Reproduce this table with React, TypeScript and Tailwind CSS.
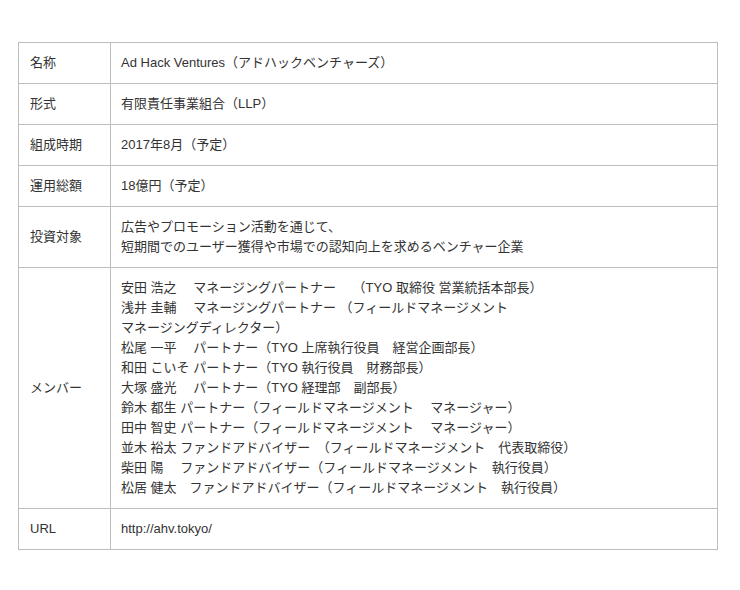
const rows: { label: string; lines: string[] }[] = [
  { label: "名称", lines: ["Ad Hack Ventures（アドハックベンチャーズ）"] },
  { label: "形式", lines: ["有限責任事業組合（LLP）"] },
  { label: "組成時期", lines: ["2017年8月（予定）"] },
  { label: "運用総額", lines: ["18億円（予定）"] },
  {
    label: "投資対象",
    lines: [
      "広告やプロモーション活動を通じて、",
      "短期間でのユーザー獲得や市場での認知向上を求めるベンチャー企業",
    ],
  },
  {
    label: "メンバー",
    lines: [
      "安田 浩之　 マネージングパートナー　 （TYO 取締役 営業統括本部長）",
      "浅井 圭輔　 マネージングパートナー （フィールドマネージメント",
      "マネージングディレクター）",
      "松尾 一平　 パートナー（TYO 上席執行役員　経営企画部長）",
      "和田 こいそ パートナー（TYO 執行役員　財務部長）",
      "大塚 盛光　 パートナー（TYO 経理部　副部長）",
      "鈴木 都生 パートナー（フィールドマネージメント　 マネージャー）",
      "田中 智史 パートナー（フィールドマネージメント　 マネージャー）",
      "並木 裕太 ファンドアドバイザー　（フィールドマネージメント　代表取締役）",
      "柴田 陽　 ファンドアドバイザー（フィールドマネージメント　執行役員）",
      "松居 健太　ファンドアドバイザー（フィールドマネージメント　執行役員）",
    ],
  },
  { label: "URL", lines: ["http://ahv.tokyo/"] },
]

export default function App() {
  return (
    <div className="min-h-[590px] bg-white pt-[42px] pl-[18px] font-['Liberation_Sans','Noto_Sans_CJK_JP',sans-serif] text-[13px] leading-[20px] text-[#333]">
      <table className="w-[700px] border-collapse border border-[#bdbdbd]">
        <tbody>
          {rows.map((row) => (
            <tr key={row.label}>
              <th className="w-[92px] border border-[#bdbdbd] py-[10px] pl-[11px] pr-2 text-left align-middle font-normal">
                {row.label}
              </th>
              <td className="border border-[#bdbdbd] py-[10px] pl-[10px] pr-2 align-middle">
                {row.lines.map((line, i) => (
                  <div key={i} className="whitespace-pre">
                    {line}
                  </div>
                ))}
              </td>
            </tr>
          ))}
        </tbody>
      </table>
    </div>
  )
}
